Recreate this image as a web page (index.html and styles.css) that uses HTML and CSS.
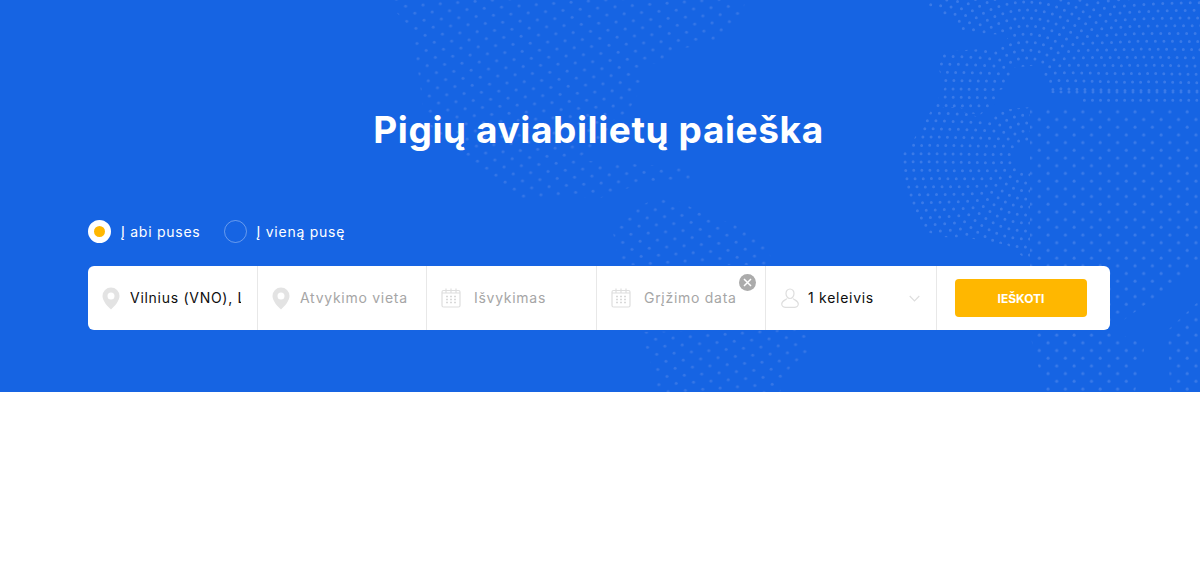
FILE: index.html
```html
<!DOCTYPE html>
<html lang="lt">
<head>
<meta charset="utf-8">
<title>Pigių aviabilietų paieška</title>
<link rel="stylesheet" href="styles.css">
</head>
<body>
<section class="hero">
  <svg class="map" width="1200" height="392" viewBox="0 0 1200 392" aria-hidden="true">
    <defs>
      <pattern id="dotsA" width="17.4" height="15.2" patternUnits="userSpaceOnUse" patternTransform="rotate(-4)">
        <circle class="dot" cx="4" cy="4" r="1.5"/><circle class="dot" cx="12.7" cy="11.6" r="1.5"/>
      </pattern>
      <pattern id="dotsB" width="17.4" height="15.4" patternUnits="userSpaceOnUse">
        <circle class="dot-bright" cx="4" cy="4" r="1.5"/><circle class="dot-bright" cx="12.7" cy="11.7" r="1.5"/>
      </pattern>
      <clipPath id="clipA"><polygon points="385,0 745,0 742,22 712,42 690,47 665,52 665,62 640,66 640,90 628,112 610,122 604,142 575,160 690,168 690,182 640,184 600,198 510,198 480,172 450,150 425,120 418,70 408,25"/></clipPath>
      <clipPath id="clipB"><polygon points="612,228 640,206 665,194 700,212 735,225 765,245 775,265 620,265"/></clipPath>
      <clipPath id="clipC"><polygon points="640,332 812,330 808,352 790,368 780,392 655,392 650,360"/></clipPath>
      <clipPath id="clipLow"><polygon points="1030,107 1000,110 985,122 960,107 933,107 918,133 902,155 905,180 907,203 913,217 922,230 940,237 968,238 1007,245 1030,262"/></clipPath>
      <clipPath id="clipUp"><polygon points="928,0 1200,0 1200,107 1085,107 1080,95 1050,93 1045,85 1040,65 1010,68 1015,85 1000,90 1000,100 980,115 933,107 945,87 938,67 940,52 965,50 1000,48 1010,35 965,33 953,20 928,6"/></clipPath>
      <clipPath id="clipR"><polygon points="1030,107 1200,107 1200,392 1170,392 1168,330 1200,300 1200,265 1110,330 1145,345 1135,392 1045,392 1030,335"/></clipPath>
    </defs>
    <g clip-path="url(#clipA)"><rect x="380" y="0" width="380" height="200" fill="url(#dotsA)"/></g>
    <g clip-path="url(#clipB)"><rect x="600" y="190" width="180" height="80" fill="url(#dotsA)"/></g>
    <g clip-path="url(#clipC)"><rect x="630" y="325" width="190" height="67" fill="url(#dotsA)"/></g>
    <g clip-path="url(#clipR)"><rect x="1020" y="100" width="180" height="292" fill="url(#dotsB)"/></g>
    <g class="rings" clip-path="url(#clipLow)">
      <circle cx="1027" cy="157" r="18"/><circle cx="1027" cy="157" r="26"/><circle cx="1027" cy="157" r="34"/>
      <circle cx="1027" cy="157" r="42"/><circle cx="1027" cy="157" r="50"/><circle cx="1027" cy="157" r="58"/>
      <circle cx="1027" cy="157" r="66"/><circle cx="1027" cy="157" r="74"/><circle cx="1027" cy="157" r="82"/>
      <circle cx="1027" cy="157" r="90"/><circle cx="1027" cy="157" r="98"/><circle cx="1027" cy="157" r="106"/>
      <circle cx="1027" cy="157" r="114"/><circle cx="1027" cy="157" r="122"/>
    </g>
    <g class="rings" clip-path="url(#clipUp)">
      <circle cx="1027" cy="92" r="26"/><circle cx="1027" cy="92" r="34"/><circle cx="1027" cy="92" r="42"/>
      <circle cx="1027" cy="92" r="50"/><circle cx="1027" cy="92" r="58"/><circle cx="1027" cy="92" r="66"/>
      <circle cx="1027" cy="92" r="74"/><circle cx="1027" cy="92" r="82"/><circle cx="1027" cy="92" r="90"/>
      <circle cx="1027" cy="92" r="98"/><circle cx="1027" cy="92" r="106"/><circle cx="1027" cy="92" r="114"/>
      <circle cx="1027" cy="92" r="122"/><circle cx="1027" cy="92" r="130"/><circle cx="1027" cy="92" r="138"/>
      <circle cx="1027" cy="92" r="146"/><circle cx="1027" cy="92" r="154"/><circle cx="1027" cy="92" r="162"/>
      <circle cx="1027" cy="92" r="170"/><circle cx="1027" cy="92" r="178"/><circle cx="1027" cy="92" r="186"/>
      <circle cx="1027" cy="92" r="194"/><circle cx="1027" cy="92" r="202"/>
    </g>
  </svg>

  <h1 class="title">Pigių aviabilietų paieška</h1>

  <div class="trip">
    <label class="trip-opt">
      <span class="radio radio-on"></span>
      <span>Į abi puses</span>
    </label>
    <label class="trip-opt">
      <span class="radio"></span>
      <span>Į vieną pusę</span>
    </label>
  </div>

  <form class="bar">
    <div class="cell cell-a">
      <svg class="ico" width="18" height="23" viewBox="0 0 18 23"><path class="pin" fill-rule="evenodd" d="M9 0.5a8.500 8.500 0 0 1 8.500 8.500c0 4.600-4.500 10-8.500 13.500C5 19 0.500 13.600 0.500 9A8.500 8.500 0 0 1 9 0.500zM9 5.500a3.500 3.500 0 1 0 0 7 3.500 3.500 0 0 0 0-7z"/></svg>
      <span class="field value">Vilnius (VNO), Lietuva</span>
    </div>
    <div class="cell cell-b">
      <svg class="ico" width="18" height="23" viewBox="0 0 18 23"><path class="pin" fill-rule="evenodd" d="M9 0.5a8.500 8.500 0 0 1 8.500 8.500c0 4.600-4.500 10-8.500 13.500C5 19 0.500 13.600 0.500 9A8.500 8.500 0 0 1 9 0.500zM9 5.500a3.500 3.500 0 1 0 0 7 3.500 3.500 0 0 0 0-7z"/></svg>
      <span class="field">Atvykimo vieta</span>
    </div>
    <div class="cell cell-c">
      <svg class="ico ico-cal" width="20" height="20" viewBox="0 0 20 20">
        <rect class="line" x="1" y="2.500" width="18" height="16.500" rx="1.500"/>
        <path class="line" d="M5 0.500v4M10 0.500v4M15 0.500v4M1 5h18"/>
        <path class="grid" d="M5 8.500h2M9 8.500h2M13 8.500h2M5 11.500h2M9 11.500h2M13 11.500h2M5 14.500h2M9 14.500h2M13 14.500h2"/>
      </svg>
      <span class="field">Išvykimas</span>
    </div>
    <div class="cell cell-d">
      <svg class="ico ico-cal" width="20" height="20" viewBox="0 0 20 20">
        <rect class="line" x="1" y="2.500" width="18" height="16.500" rx="1.500"/>
        <path class="line" d="M5 0.500v4M10 0.500v4M15 0.500v4M1 5h18"/>
        <path class="grid" d="M5 8.500h2M9 8.500h2M13 8.500h2M5 11.500h2M9 11.500h2M13 11.500h2M5 14.500h2M9 14.500h2M13 14.500h2"/>
      </svg>
      <span class="field">Grįžimo data</span>
      <span class="clear">
        <svg width="9" height="9" viewBox="0 0 9 9"><path class="clear-x" d="M1 1l7 7M8 1l-7 7"/></svg>
      </span>
    </div>
    <div class="cell cell-e">
      <svg class="ico ico-user" width="18" height="20" viewBox="0 0 18 20">
        <path class="line" d="M9 1c-2.600 0-4 2-4 4.500 0 2.200 1.500 5 4 5s4-2.800 4-5C13 3 11.600 1 9 1z"/>
        <path class="line" d="M6 10.500c-1 1.500-5.300 2-5.300 5.500 0 2 2 3.300 4 3.300h8.600c2 0 4-1.300 4-3.300 0-3.500-4.300-4-5.300-5.500"/>
      </svg>
      <span class="field value">1 keleivis</span>
      <svg class="chev" width="11" height="7" viewBox="0 0 11 7"><path class="line" d="M0.700 1l4.800 4.800L10.300 1"/></svg>
    </div>
    <div class="cell-btn">
      <button class="search" type="button">IEŠKOTI</button>
    </div>
  </form>
</section>
</body>
</html>
```

FILE: styles.css
```css
* { box-sizing: border-box; }

html, body {
  margin: 0;
  padding: 0;
  background: #fff;
}

body {
  font-family: "Inter", "Open Sans", sans-serif;
  height: 574px;
  overflow: hidden;
}

.hero {
  position: relative;
  height: 392px;
  background: #1664e3;
  padding: 107px 90px 0 88px;
  overflow: hidden;
}

.map {
  position: absolute;
  left: 0;
  top: 0;
}

.dot { fill: #3676e6; }
.dot-bright { fill: #3a7ae8; }

.rings circle {
  fill: none;
  stroke: #3a7ae8;
  stroke-width: 3;
  stroke-linecap: round;
  stroke-dasharray: 0 8.4;
}

.title {
  position: relative;
  margin: 0 0 0 -1px;
  text-align: center;
  color: #fff;
  font-size: 37px;
  line-height: 45px;
  font-weight: 700;
  letter-spacing: 0.6px;
}

.trip {
  position: relative;
  display: flex;
  gap: 23px;
  margin-top: 68px;
  height: 23px;
}

.trip-opt {
  display: flex;
  align-items: center;
  gap: 10px;
  color: #fff;
  font-size: 14px;
  letter-spacing: 0.75px;
}

.radio {
  width: 23px;
  height: 23px;
  border-radius: 50%;
  border: 1px solid rgba(255, 255, 255, 0.35);
}

.radio-on {
  border: 6.5px solid #fff;
  background: #ffb700;
}

.bar {
  position: relative;
  display: flex;
  height: 64px;
  margin-top: 23px;
  background: #fff;
  border-radius: 6px;
  width: 1022px;
}

.cell {
  display: flex;
  align-items: center;
  position: relative;
  border-right: 1px solid #e8e8e8;
  padding-left: 14px;
}

.cell-a { width: 170px; }
.cell-b { width: 169px; }
.cell-c { width: 170px; }
.cell-d { width: 169px; }
.cell-e { width: 171px; }

.ico { flex: none; margin-right: 10px; }
.ico-cal { margin-right: 13px; }
.ico-user { margin-right: 9px; margin-left: 1px; }

.pin { fill: #e3e3e3; }

.line {
  fill: none;
  stroke: #dedede;
  stroke-width: 1.200;
}

.grid {
  fill: none;
  stroke: #d9d9d9;
  stroke-width: 1.500;
}

.field {
  width: 111px;
  overflow: hidden;
  white-space: nowrap;
  color: #a6a6a6;
  font-size: 14px;
  line-height: 20px;
  letter-spacing: 0.72px;
}

.value { color: #0d0d0d; }

.cell-e .field { width: 86px; }

.clear {
  position: absolute;
  top: 8px;
  right: 9px;
  width: 17px;
  height: 17px;
  border-radius: 50%;
  background: #ababab;
  display: flex;
  align-items: center;
  justify-content: center;
}

.clear-x {
  fill: none;
  stroke: #fff;
  stroke-width: 1.500;
}

.chev { flex: none; margin-left: 15px; }

.cell-btn {
  flex: 1;
  padding: 13px 0 0 18px;
}

.search {
  display: block;
  width: 132px;
  height: 38px;
  border: 0;
  border-radius: 4px;
  background: #ffb700;
  color: #fff;
  font-family: inherit;
  font-size: 12px;
  font-weight: 700;
  padding: 0;
}
```
